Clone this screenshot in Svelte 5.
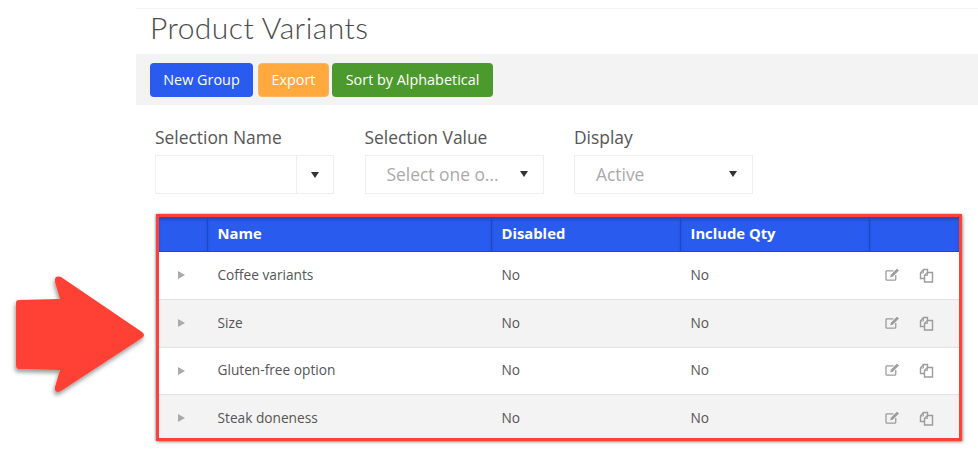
<script lang="ts">
  // Product Variants list with annotation arrow and red frame
  const rows = ['Coffee variants', 'Size', 'Gluten-free option', 'Steak doneness'];
</script>

<div class="page">
  <svg class="arrow" width="150" height="150" viewBox="0 0 150 150" aria-hidden="true">
    <defs>
      <filter id="arrow-shadow" x="-20%" y="-20%" width="140%" height="140%">
        <feDropShadow dx="-1" dy="3" stdDeviation="2" flood-color="#000" flood-opacity="0.4" />
      </filter>
    </defs>
    <path
      d="M17 40 L60 39 L55 22 Q54 15 61 17 L142 72 Q146 75 142 78 L61 131 Q54 134 55 127 L60 110 L19 109 Q16 109 16 105 L16 43 Q16 40 19 40 Z"
      fill="#ff4136"
      filter="url(#arrow-shadow)"
    />
  </svg>

  <main class="content">
    <h1>Product Variants</h1>

    <div class="toolbar">
      <button class="btn blue">New Group</button>
      <button class="btn orange">Export</button>
      <button class="btn green">Sort by Alphabetical</button>
    </div>

    <div class="filters">
      <div class="field">
        <span class="label">Selection Name</span>
        <div class="select split">
          <span class="value"></span>
          <span class="caret-cell"><i class="caret"></i></span>
        </div>
      </div>
      <div class="field">
        <span class="label">Selection Value</span>
        <div class="select">
          <span class="value">Select one o...</span>
          <i class="caret"></i>
        </div>
      </div>
      <div class="field">
        <span class="label">Display</span>
        <div class="select">
          <span class="value">Active</span>
          <i class="caret"></i>
        </div>
      </div>
    </div>

    <div class="frame">
      <table>
        <thead>
          <tr>
            <th class="c-toggle"></th>
            <th class="c-name">Name</th>
            <th class="c-dis">Disabled</th>
            <th class="c-qty">Include Qty</th>
            <th></th>
          </tr>
        </thead>
        <tbody>
          {#each rows as name}
            <tr>
              <td class="toggle"><i class="tri"></i></td>
              <td>{name}</td>
              <td>No</td>
              <td>No</td>
              <td class="actions">
                <svg width="15" height="13" viewBox="0 0 16 14" fill="none" stroke="#9c9c9c" stroke-width="1.4">
                  <path d="M11.5 7.5 V12 a1 1 0 0 1 -1 1 H2 a1 1 0 0 1 -1 -1 V4 a1 1 0 0 1 1 -1 H9" />
                  <path d="M6 9.5 L6.6 7.2 L12.8 1.2 L14.6 2.8 L8.4 8.9 Z" fill="#9c9c9c" stroke-width="0.8" />
                </svg>
                <svg width="15" height="15" viewBox="0 0 15 15" fill="none" stroke="#9c9c9c" stroke-width="1.4">
                  <path d="M5 10.5 H1.5 V5 L4.5 1.5 H8.5 V4.5" />
                  <path d="M4.5 1.5 V5 H1.5" stroke-width="0.9" />
                  <path d="M5.5 7.5 L8.5 4.5 H13.5 V14 H5.5 Z" />
                  <path d="M8.5 4.5 V7.5 H5.5" stroke-width="0.9" />
                </svg>
              </td>
            </tr>
          {/each}
        </tbody>
      </table>
    </div>
  </main>
</div>

<style>
  :global(body) {
    background: #fff;
  }
  .page {
    position: relative;
    width: 978px;
    height: 467px;
    overflow: hidden;
    font-family: 'Open Sans', 'Liberation Sans', sans-serif;
    color: #555;
  }
  .arrow {
    position: absolute;
    left: 0;
    top: 260px;
  }
  .content {
    margin-left: 136px;
    padding-top: 8px;
  }
  h1 {
    margin: 0;
    height: 45px;
    padding-left: 14px;
    border-top: 1px solid #f4f4f4;
    font-family: Lato, 'Open Sans', sans-serif;
    font-size: 30px;
    font-weight: 300;
    line-height: 37px;
    color: #4a4a4a;
    letter-spacing: 0.45px;
  }
  .toolbar {
    display: flex;
    height: 51px;
    box-sizing: border-box;
    padding: 9px 0 0 14px;
    background: #f3f3f3;
  }
  .btn {
    height: 34px;
    padding: 0;
    border: 1px solid transparent;
    border-radius: 4px;
    color: #fff;
    font: 14.4px/1 'Open Sans', sans-serif;
  }
  .blue {
    width: 103px;
    background: #295cee;
    margin-right: 5px;
  }
  .orange {
    width: 71px;
    background: #ffa93f;
    border-color: #fbb561;
    margin-right: 3px;
  }
  .green {
    width: 161px;
    background: #4c9a2e;
  }
  .filters {
    display: flex;
    gap: 30.5px;
    padding: 22px 0 0 19px;
  }
  .field {
    display: flex;
    flex-direction: column;
    gap: 8px;
  }
  .label {
    font-size: 17.4px;
    line-height: 20px;
    color: #555;
  }
  .select {
    display: flex;
    align-items: center;
    width: 179px;
    height: 39px;
    box-sizing: border-box;
    padding: 0 15px 1px 21px;
    border: 1px solid #eee;
    background: #fff;
  }
  .value {
    flex: 1;
    font-size: 17.4px;
    color: #aaa;
  }
  .split {
    padding: 0;
  }
  .caret-cell {
    display: flex;
    align-items: center;
    justify-content: center;
    width: 36px;
    height: 100%;
    border-left: 1px solid #eee;
  }
  .caret {
    width: 0;
    height: 0;
    border-left: 4px solid transparent;
    border-right: 4px solid transparent;
    border-top: 6px solid #333;
  }
  .frame {
    margin: 20px 0 0 20px;
    width: 806px;
    height: 227px;
    box-sizing: border-box;
    border: 3px solid #ff3f3a;
    box-shadow: 1px 1px 3px rgba(0, 0, 0, 0.4), -1px 0 2px rgba(0, 0, 0, 0.25);
    overflow: hidden;
  }
  table {
    width: 800px;
    border-collapse: collapse;
    table-layout: fixed;
    font-size: 13.7px;
  }
  th,
  td {
    box-sizing: border-box;
  }
  th {
    height: 34px;
    padding: 0 0 2px 10px;
    background: #295cee;
    border-left: 1px solid #1a49cf;
    border-bottom: 1px solid #1a49cf;
    color: #fff;
    font-size: 14.8px;
    font-weight: 700;
    text-align: left;
    box-shadow: inset 0 3px 3px rgba(0, 0, 0, 0.18);
  }
  th:first-child {
    border-left: 0;
  }
  .c-toggle {
    width: 48px;
  }
  .c-name {
    width: 284px;
  }
  .c-dis,
  .c-qty {
    width: 189px;
  }
  td {
    height: 47px;
    padding: 0 0 2px 10.5px;
    border-bottom: 1px solid #e2e2e2;
    color: #555;
  }
  tbody tr:nth-child(-n + 2) td {
    height: 48px;
  }
  tbody tr:nth-child(even) td {
    background: #f3f3f3;
  }
  tbody tr:last-child td {
    border-bottom: 0;
    height: 44px;
    padding-top: 2px;
    padding-bottom: 0;
  }
  td.toggle {
    padding-left: 19px;
  }
  .tri {
    display: block;
    width: 0;
    height: 0;
    margin-top: 2px;
    border-top: 4.5px solid transparent;
    border-bottom: 4.5px solid transparent;
    border-left: 7px solid #aaa;
  }
  .actions {
    white-space: nowrap;
  }
  .actions svg {
    vertical-align: middle;
    margin-bottom: 1px;
  }
  .actions svg:first-child {
    margin: 0 16px 3px 5px;
  }
</style>
